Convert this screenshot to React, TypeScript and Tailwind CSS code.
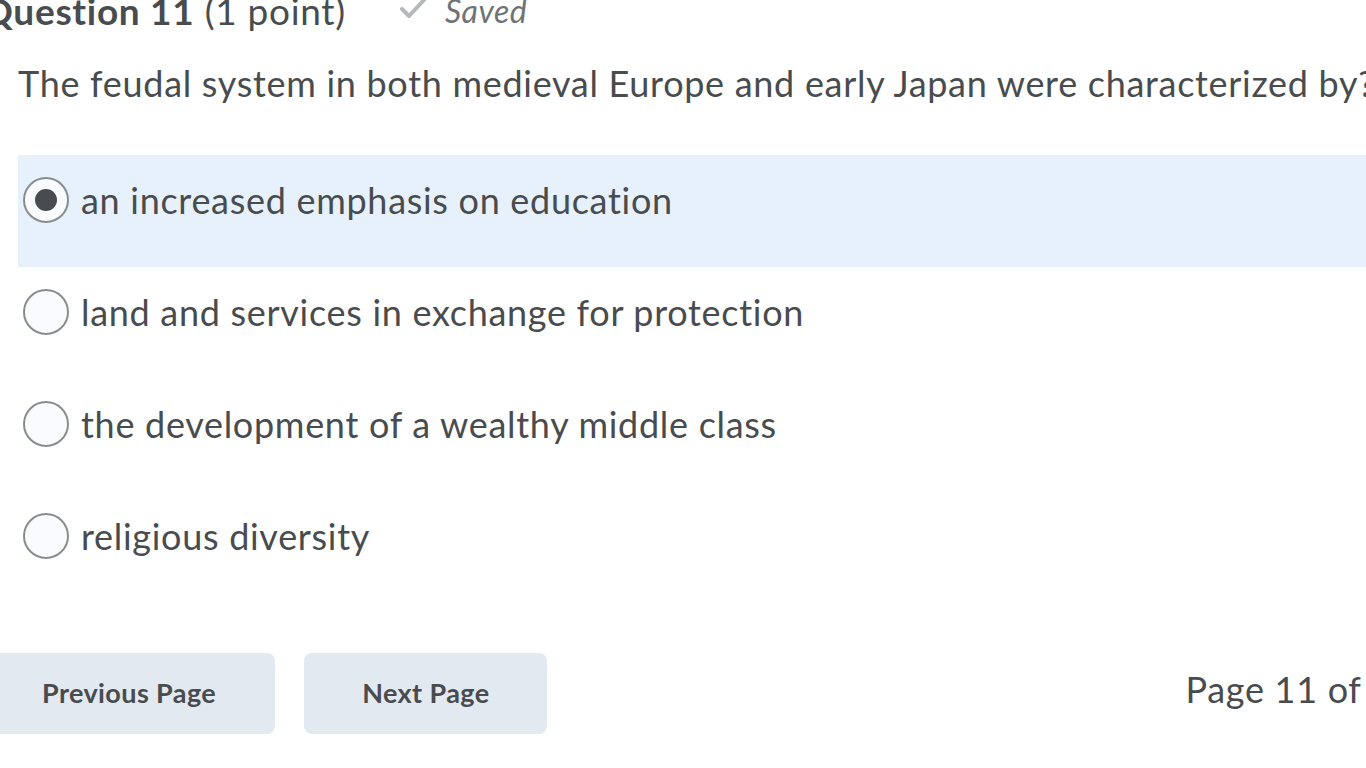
import React from 'react';

const options = [
  { id: 'a', text: 'an increased emphasis on education', selected: true },
  { id: 'b', text: 'land and services in exchange for protection', selected: false },
  { id: 'c', text: 'the development of a wealthy middle class', selected: false },
  { id: 'd', text: 'religious diversity', selected: false },
];

function Radio({ checked }: { checked: boolean }) {
  return (
    <div className="w-[46px] h-[46px] shrink-0 rounded-full border-2 border-[#888d91] bg-[#f9fbfe] flex items-center justify-center">
      {checked && <div className="w-[22px] h-[22px] rounded-full bg-[#494c4e]" />}
    </div>
  );
}

export default function App() {
  return (
    <div className="w-[1366px] h-[768px] overflow-hidden bg-white text-[#494c4e] font-['Lato',sans-serif] tracking-[0.7px] [font-variant-ligatures:none]">
      <div className="ml-[-17px] w-[1500px]">
        {/* Header */}
        <div className="flex items-center h-[44px] mt-[-11px]">
          <h2 className="text-[37px] leading-[44px] whitespace-nowrap">
            <span className="font-bold">Question 11</span> <span>(1 point)</span>
          </h2>
          <div className="flex items-center ml-[53px] text-[32px] leading-[44px] italic text-[#6e7376] tracking-[0.5px]">
            <svg viewBox="0 0 28 22" className="w-[28px] h-[22px] mr-[18px] mt-[-6px]" fill="none" stroke="#b4b8bb" strokeWidth="4" strokeLinecap="round" strokeLinejoin="round">
              <path d="M3 12 L10 19 L25 3" />
            </svg>
            <span>Saved</span>
          </div>
        </div>

        {/* Question */}
        <p className="ml-[35px] mt-[26px] text-[36px] leading-[48px] whitespace-nowrap">
          The feudal system in both medieval Europe and early Japan were characterized by?
        </p>

        {/* Options */}
        <div className="ml-[35px] mt-[48px] flex flex-col">
          {options.map((o) => (
            <div
              key={o.id}
              className={`h-[112px] pt-[22px] pl-[5px] ${o.selected ? 'bg-[#e6f1fc]' : ''}`}
            >
              <div className="flex items-center gap-[12px] h-[46px]">
                <Radio checked={o.selected} />
                <span className="text-[36px] leading-[48px] whitespace-nowrap">{o.text}</span>
              </div>
            </div>
          ))}
        </div>

        {/* Footer */}
        <div className="mt-[50px] flex items-center">
          <button className="h-[81px] px-[59px] rounded-[8px] bg-[#e3e9f1] text-[27px] tracking-[0.4px] font-bold text-[#494c4e] whitespace-nowrap">
            Previous Page
          </button>
          <button className="ml-[29px] h-[81px] px-[58px] rounded-[8px] bg-[#e3e9f1] text-[27px] tracking-[0.4px] font-bold text-[#494c4e] whitespace-nowrap">
            Next Page
          </button>
          <span className="ml-[638px] mb-[10px] text-[36px] leading-[48px] whitespace-nowrap">Page 11 of 20</span>
        </div>
      </div>
    </div>
  );
}
